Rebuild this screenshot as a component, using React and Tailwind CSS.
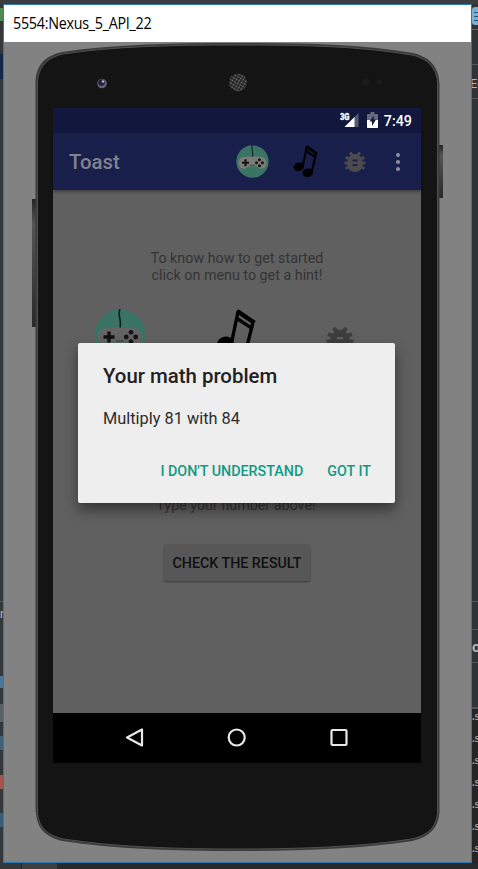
import React from 'react';

function Gamepad({ className, pad }) {
  return (
    <svg viewBox="0 0 52 52" className={className}>
      <circle cx="26" cy="26" r="25.5" fill="#3a7464" />
      <path d="M26 0c-3 7 2 9 0 19" fill="none" stroke="#0e1d19" strokeWidth="1.6" />
      <path d="M15 18.500h22c8 0 11 5 11 10s-3 9-8 9c-5 0-6-4-9-4H21c-3 0-4 4-9 4-5 0-8-4-8-9s3-10 11-10z" fill={pad} />
      <path d="M15 22.500v11M9.500 28h11" stroke="#111" strokeWidth="3.4" />
      <g fill="#151515">
        <circle cx="37" cy="23.300" r="2.400" />
        <circle cx="37" cy="32.700" r="2.400" />
        <circle cx="32.300" cy="28" r="2.400" />
        <circle cx="41.700" cy="28" r="2.400" />
      </g>
      <path d="M22 32h8" stroke="#454545" strokeWidth="1.500" />
    </svg>
  );
}

function Music({ className }) {
  return (
    <svg viewBox="0 0 26 34" className={className}>
      <g fill="none" stroke="#000">
        <path d="M10 22.500 14.500 1M19.200 28.500 24 9" strokeWidth="2.200" />
        <path d="M13.800 1.400 25.100 9" strokeWidth="2.900" />
        <path d="M13 5.800 24 13" strokeWidth="2.300" />
      </g>
      <ellipse cx="6" cy="22.500" rx="5.400" ry="4.400" transform="rotate(-12 6 22.500)" />
      <ellipse cx="15.300" cy="28.700" rx="5.400" ry="4.400" transform="rotate(-12 15.300 28.700)" />
    </svg>
  );
}

function Bug({ className, fill, hole }) {
  return (
    <svg viewBox="0 0 22 22" className={className}>
      <path d="M6 1.500 9 5M16 1.500 13 5M1.500 6.500 6 8M20.500 6.500 16 8M.5 12h21M1.500 17.500 6 15.500M20.500 17.500 16 15.500" stroke={fill} strokeWidth="3" fill="none" />
      <path d="M11 3c3 0 5 1.500 6.200 4 1.200 2 1.600 3.500 1.600 5.500 0 5-3.300 8.500-7.800 8.500s-7.800-3.500-7.800-8.500c0-2 .4-3.500 1.600-5.500C6 4.500 8 3 11 3z" fill={fill} />
      <path d="M8.500 9.500h5M8.500 14.200h5" stroke={hole} strokeWidth="1.800" />
    </svg>
  );
}

function PhoneFrame() {
  return (
    <svg width="467" height="820" viewBox="4 42 467 820" className="absolute left-0 top-0">
      <defs>
        <linearGradient id="key" x1="0" y1="0" x2="0" y2="1">
          <stop offset="0" stopColor="#252525" />
          <stop offset=".2" stopColor="#555" />
          <stop offset="1" stopColor="#282828" />
        </linearGradient>
        <pattern id="mesh" width="3" height="3" patternUnits="userSpaceOnUse" patternTransform="rotate(30)">
          <rect width="3" height="3" fill="#1c1c1c" />
          <circle cx="1.500" cy="1.500" r="1" fill="#777" />
        </pattern>
      </defs>
      <rect x="32" y="199" width="5" height="128" fill="url(#key)" />
      <rect x="438" y="145" width="5" height="53" fill="url(#key)" />
      <path d="M35.500 812V82C36 66 44 56 62 52 115 44 175 43 238 43s123 1 175 10c17 4 26 14 26.500 31V812c-1 16-10 25-27 29-52 8-112 10-175 10s-123-2-175-10c-17-4-26-13-26.500-29z" fill="#3b3b3b" />
      <path d="M37.500 812V83C38 68 46 58 63 54 115 46 175 45 238 45s122 1 174 10c17 4 25 14 25.500 29V812c-1 15-9 23-26 27-52 8-111 10-174 10s-122-2-174-10c-17-4-25-12-26-27z" fill="#141414" stroke="#505050" strokeWidth="1" />
      <path d="M39.500 812V83C40 69 48 60 64 56 115 48 175 47 238 47s121 1 173 10c16 4 24 14 24.500 27V812c-1 14-9 22-25 26-52 8-110 9-173 9s-121-1-173-9c-16-4-24-12-25-26z" fill="#141414" />
      <circle cx="102" cy="83.500" r="4.800" fill="#656074" />
      <circle cx="101.500" cy="82.500" r="3.300" fill="#242044" />
      <circle cx="103" cy="81.500" r="1.200" fill="#b8b4cc" />
      <circle cx="238" cy="82.500" r="9" fill="url(#mesh)" />
      <circle cx="366" cy="82" r="4" fill="#1b1b1b" />
      <circle cx="379" cy="82" r="2.500" fill="#1c1c1c" />
    </svg>
  );
}

function StatusBar() {
  return (
    <div className="flex h-[25px] items-center justify-end bg-[#12173d] pr-[9px] text-white">
      <svg width="19" height="17" viewBox="0 0 19 17" className="mr-[8px]">
        <path d="M18.500 1v14h-14z" fill="#555974" />
        <path d="M14.500 5v10h-10z" fill="#fff" />
        <text x="0" y="7.500" fontSize="9" fontWeight="900" fill="#fff" stroke="#fff" strokeWidth=".3" fontFamily="Roboto, sans-serif" textLength="9.500" lengthAdjust="spacingAndGlyphs">3G</text>
      </svg>
      <svg width="11" height="16" viewBox="0 0 11 16" className="mr-[6px] mb-px">
        <path d="M3.500 0h4v2H10c.6 0 1 .4 1 1v5H0V3c0-.6.4-1 1-1h2.500z" fill="#666a80" />
        <path d="M0 8h11v7c0 .6-.4 1-1 1H1c-.6 0-1-.4-1-1z" fill="#fff" />
        <path d="M7 3.500 2.500 9.500H5V14l4-6.500H6.500z" fill="#12173d" />
      </svg>
      <span className="pt-px text-[14.300px] leading-none font-medium">7:49</span>
    </div>
  );
}

function AppBar() {
  return (
    <div className="flex h-[57px] items-center bg-[#191f4b] pl-[16px] shadow-[0_2px_3px_rgba(0,0,0,0.35)]">
      <span className="w-[167px] pt-[2px] text-[20.400px] leading-none font-medium text-[#81838f]">Toast</span>
      <Gamepad className="h-[33px] w-[33px]" pad="#7c7b77" />
      <Music className="ml-[24px] h-[33px] w-[25px]" />
      <Bug className="ml-[26px] h-[22px] w-[22px]" fill="#4b4b4e" hole="#191f4b" />
      <div className="ml-[30px] flex flex-col gap-[3px]">
        <i className="h-[4px] w-[4px] rounded-full bg-[#8f919c]" />
        <i className="h-[4px] w-[4px] rounded-full bg-[#8f919c]" />
        <i className="h-[4px] w-[4px] rounded-full bg-[#8f919c]" />
      </div>
    </div>
  );
}

function Dialog() {
  return (
    <div className="absolute top-[235px] left-[25px] h-[160px] w-[317px] rounded-[2px] bg-[#eeeeee] px-[25px] pt-[21px] shadow-[0_7px_14px_rgba(0,0,0,0.45)]">
      <h2 className="text-[20.400px] leading-6 font-medium whitespace-nowrap text-[#212121]">Your math problem</h2>
      <p className="mt-[20px] text-[16.350px] leading-[22px] whitespace-nowrap text-[#2c2c2c]">Multiply 81 with 84</p>
      <div className="mt-[31px] mr-[-1px] flex justify-end gap-[24px] text-[14.300px] leading-5 font-medium whitespace-nowrap text-[#109a85]">
        <button>I DON'T UNDERSTAND</button>
        <button>GOT IT</button>
      </div>
    </div>
  );
}

function Screen() {
  return (
    <div className="relative flex h-[655px] w-[368px] flex-col bg-[#606060] font-['Roboto',sans-serif]">
      <StatusBar />
      <AppBar />
      <main className="flex flex-1 flex-col items-center overflow-hidden text-[14.300px] leading-[17px] text-[#343434]">
        <p className="mt-[60px] text-center whitespace-nowrap">
          To know how to get started
          <br />
          click on menu to get a hint!
        </p>
        <div className="mt-[25px] flex h-[52px] w-[286px] items-start">
          <Gamepad className="h-[52px] w-[52px]" pad="#646464" />
          <Music className="ml-[70px] h-[52px] w-[40px]" />
          <Bug className="mt-[17px] ml-[70px] h-[28px] w-[28px]" fill="#3d3d3d" hole="#606060" />
        </div>
        <p className="mt-[136px] mr-[2px] whitespace-nowrap">Type your number above!</p>
        <button className="mt-[30px] h-[37px] w-[146px] rounded-[2px] bg-[#575757] pt-px text-[14.250px] font-medium whitespace-nowrap text-[#101010] shadow-[0_1px_2px_rgba(0,0,0,0.4)]">CHECK THE RESULT</button>
      </main>
      <nav className="flex h-[50px] items-center justify-between bg-black px-[72px]">
        <svg width="19" height="20" viewBox="0 0 19 20" fill="none" stroke="#e8e8e8" strokeWidth="2.200" strokeLinejoin="round"><path d="M2 9.500 17 1.500v16z" /></svg>
        <svg width="20" height="20" viewBox="0 0 20 20" fill="none" stroke="#e8e8e8" strokeWidth="2.200"><circle cx="9.700" cy="9.500" r="8" /></svg>
        <svg width="19" height="20" viewBox="0 0 19 20" fill="none" stroke="#e8e8e8" strokeWidth="2.200"><rect x="1.500" y="2" width="15" height="15" rx="1" /></svg>
      </nav>
      <Dialog />
    </div>
  );
}

function LeftStrip() {
  return (
    <div className="flex w-[3px] flex-col overflow-hidden bg-[#35383a]">
      <div className="mt-[4px] h-[13px] bg-[#4f8a54]" />
      <div className="mt-[33px] h-[25px] bg-[#10294a]" />
      <div className="mt-[522px] h-px bg-[#555]" />
      <span className="mt-[3px] font-['Roboto',sans-serif] text-[12px] leading-[18px] text-[#bbb]">n</span>
      <div className="mt-[53px] h-[12px] bg-[#4a7799]" />
      <div className="mt-[16px] h-[18px] bg-[#596066]" />
      <div className="mt-[14px] h-[14px] bg-[#40617a]" />
      <div className="mt-[25px] h-[14px] bg-[#a0564b]" />
      <div className="mt-[24px] h-[14px] bg-[#355d78]" />
    </div>
  );
}

function RightStrip() {
  return (
    <div className="flex w-[6px] flex-col overflow-hidden bg-[#313335] font-['Roboto',sans-serif] text-[13px] text-[#b5b5b5]">
      <div className="mt-[3px] flex h-[18px] flex-col items-end justify-center gap-[3px] rounded-l-[3px] bg-[#76b2d8]">
        <i className="h-px w-[4px] bg-[#27506b]" />
        <i className="h-px w-[4px] bg-[#27506b]" />
        <i className="h-px w-[4px] bg-[#27506b]" />
      </div>
      <div className="mt-[4px] h-px bg-[#666]" />
      <div className="mt-[34px] h-px bg-[#555]" />
      <span className="mt-[9px] -ml-[2px] leading-[20px]">Ec</span>
      <div className="mt-[4px] h-px bg-[#555]" />
      <div className="mt-[502px] h-px bg-[#555]" />
      <div className="mt-[27px] h-px bg-[#555]" />
      <span className="mt-[7px] text-[15px] leading-[20px] font-bold">o</span>
      <div className="mt-[5px] h-px bg-[#555]" />
      <div className="mt-[44px] h-[3px] bg-[#555]" />
      <div className="-mt-px flex-1 bg-[#252525] font-['Liberation_Mono',monospace] text-[11px] leading-[17px]">
        {[0, 1, 2, 3, 4, 5, 6].map((n) => (
          <div key={n} className="-ml-[2px] h-[22px] tracking-[-2.500px] whitespace-nowrap">.s</div>
        ))}
      </div>
    </div>
  );
}

export default function App() {
  return (
    <div className="flex h-[869px] w-[478px] flex-col overflow-hidden bg-[#2b2d2e]">
      <div className="h-[4px] bg-[#3b3d3f]" />
      <div className="flex h-[859px]">
        <LeftStrip />
        <section className="flex w-[469px] flex-col border border-[#2d79b0] bg-[#828282]">
          <header className="flex h-[37px] items-center bg-white pl-[9px] font-['Open_Sans',sans-serif] text-[15.500px] whitespace-nowrap text-black">
            <span className="origin-left scale-x-[0.925] tracking-[-0.300px]">5554:Nexus_5_API_22</span>
          </header>
          <div className="relative h-[820px] pt-[66px] pl-[49px]">
            <PhoneFrame />
            <Screen />
          </div>
        </section>
        <RightStrip />
      </div>
      <div className="flex h-[6px]">
        <div className="w-[22px] border-r border-[#222] bg-[#35383a]" />
        <div className="w-[35px] bg-[#3e4042]" />
        <div className="flex-1 bg-[#27292a]" />
      </div>
    </div>
  );
}
